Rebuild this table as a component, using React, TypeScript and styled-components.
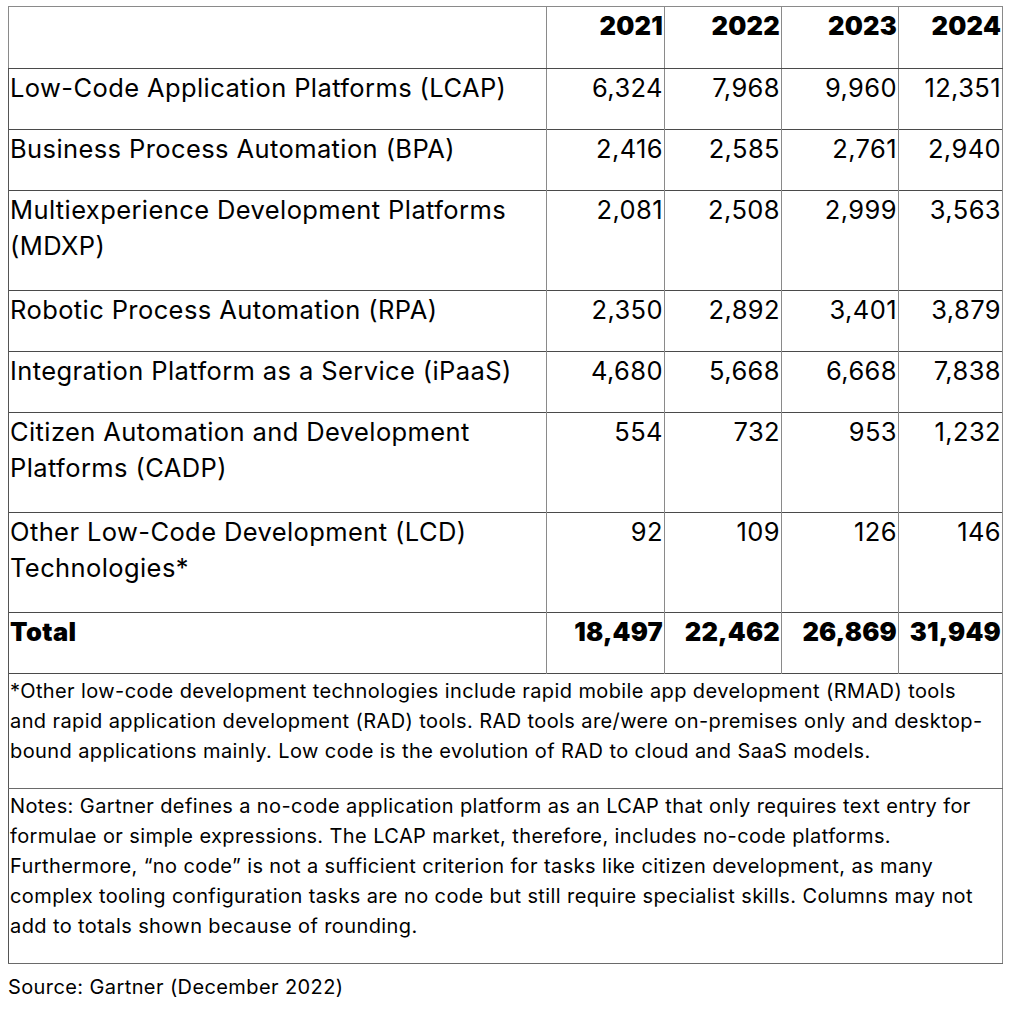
import React from "react";
import styled, { createGlobalStyle } from "styled-components";

const Global = createGlobalStyle`
  html, body { margin: 0; padding: 0; background: #fff; }
  body { padding: 6px 8px; font-family: "Inter", "Open Sans", sans-serif; color: #000; }
`;

const Table = styled.table`
  width: 994px;
  border-collapse: collapse;
  table-layout: fixed;
  font-size: 25.5px;
  letter-spacing: 0.4px;
  line-height: 36px;
`;

const HeadCell = styled.th<{ $first?: boolean }>`
  border: 1px solid #8a8a8a;
  border-bottom: 1px solid #4a4a4a;
  padding: 1px 1px 24px 1px;
  text-align: ${(p) => (p.$first ? "left" : "right")};
  font-weight: 900;
  letter-spacing: 0.2px;
  vertical-align: top;
`;

const Row = styled.tr`
  border-top: 1px solid #4a4a4a;
  border-bottom: 1px solid #4a4a4a;
`;

const Label = styled.td<{ $bold?: boolean; $tall?: boolean }>`
  border-left: 1px solid #555;
  border-right: 1px solid #8a8a8a;
  padding: 1px 2px ${(p) => (p.$tall ? 26 : 23)}px 1px;
  vertical-align: top;
  text-align: left;
  font-weight: ${(p) => (p.$bold ? 900 : 400)};
`;

const Num = styled.td<{ $bold?: boolean }>`
  border-left: 1px solid #8a8a8a;
  border-right: 1px solid #8a8a8a;
  padding: 1px 1px 23px 1px;
  vertical-align: top;
  text-align: right;
  font-weight: ${(p) => (p.$bold ? 900 : 400)};
  letter-spacing: ${(p) => (p.$bold ? "0.2px" : "0.4px")};
`;

const NoteCell = styled.td`
  border-left: 1px solid #555;
  border-right: 1px solid #8a8a8a;
  border-top: 1px solid #4a4a4a;
  border-bottom: 1px solid #6a6a6a;
  padding: 2px 2px 22px 1px;
  font-size: 20px;
  letter-spacing: 0.4px;
  line-height: 30px;
  vertical-align: top;
`;

const Source = styled.p`
  margin: 8px 0 0 0;
  font-size: 20px;
  letter-spacing: 0.4px;
  line-height: 30px;
`;

type R = { label: string; values: string[]; bold?: boolean; tall?: boolean };

const rows: R[] = [
  { label: "Low-Code Application Platforms (LCAP)", values: ["6,324", "7,968", "9,960", "12,351"] },
  { label: "Business Process Automation (BPA)", values: ["2,416", "2,585", "2,761", "2,940"] },
  { label: "Multiexperience Development Platforms (MDXP)", values: ["2,081", "2,508", "2,999", "3,563"], tall: true },
  { label: "Robotic Process Automation (RPA)", values: ["2,350", "2,892", "3,401", "3,879"] },
  { label: "Integration Platform as a Service (iPaaS)", values: ["4,680", "5,668", "6,668", "7,838"] },
  { label: "Citizen Automation and Development Platforms (CADP)", values: ["554", "732", "953", "1,232"], tall: true },
  { label: "Other Low-Code Development (LCD) Technologies*", values: ["92", "109", "126", "146"], tall: true },
  { label: "Total", values: ["18,497", "22,462", "26,869", "31,949"], bold: true },
];

export default function App() {
  return (
    <>
      <Global />
      <Table>
        <colgroup>
          <col style={{ width: 538 }} />
          <col style={{ width: 118 }} />
          <col style={{ width: 117 }} />
          <col style={{ width: 117 }} />
          <col style={{ width: 104 }} />
        </colgroup>
        <thead>
          <tr>
            <HeadCell $first />
            <HeadCell>2021</HeadCell>
            <HeadCell>2022</HeadCell>
            <HeadCell>2023</HeadCell>
            <HeadCell>2024</HeadCell>
          </tr>
        </thead>
        <tbody>
          {rows.map((r) => (
            <Row key={r.label}>
              <Label $bold={r.bold} $tall={r.tall}>{r.label}</Label>
              {r.values.map((v, i) => (
                <Num key={i} $bold={r.bold}>{v}</Num>
              ))}
            </Row>
          ))}
          <tr>
            <NoteCell colSpan={5}>
              *Other low-code development technologies include rapid mobile app development (RMAD) tools
              <br />
              and rapid application development (RAD) tools. RAD tools are/were on-premises only and desktop-
              <br />
              bound applications mainly. Low code is the evolution of RAD to cloud and SaaS models.
            </NoteCell>
          </tr>
          <tr>
            <NoteCell colSpan={5}>
              Notes: Gartner defines a no-code application platform as an LCAP that only requires text entry for
              <br />
              formulae or simple expressions. The LCAP market, therefore, includes no-code platforms.
              <br />
              Furthermore, “no code” is not a sufficient criterion for tasks like citizen development, as many
              <br />
              complex tooling configuration tasks are no code but still require specialist skills. Columns may not
              <br />
              add to totals shown because of rounding.
            </NoteCell>
          </tr>
        </tbody>
      </Table>
      <Source>Source: Gartner (December 2022)</Source>
    </>
  );
}
